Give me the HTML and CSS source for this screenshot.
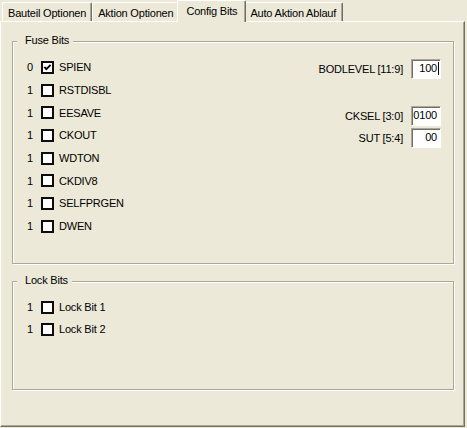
FILE: index.html
```html
<!DOCTYPE html>
<html>
<head>
<meta charset="utf-8">
<link rel="stylesheet" href="styles.css">
</head>
<body>
<div class="dlg">
  <div class="tabs">
    <div class="tab t1">Bauteil Optionen</div>
    <div class="tab t2">Aktion Optionen</div>
    <div class="tab active">Config Bits</div>
    <div class="tab t4">Auto Aktion Ablauf</div>
  </div>
  <div class="panel">
    <div class="group fuse">
      <div class="legend">Fuse Bits</div>
      <div class="fuse-body">
        <div class="bits">
          <div class="row"><span class="num">0</span><span class="cb"><svg width="9" height="9" viewBox="0 0 9 9"><path d="M1.3 3.9 L3.4 6.2 L7.6 1.8" fill="none" stroke="#000" stroke-width="1.9"/></svg></span><span class="lbl">SPIEN</span></div>
          <div class="row"><span class="num">1</span><span class="cb"></span><span class="lbl">RSTDISBL</span></div>
          <div class="row"><span class="num">1</span><span class="cb"></span><span class="lbl">EESAVE</span></div>
          <div class="row"><span class="num">1</span><span class="cb"></span><span class="lbl">CKOUT</span></div>
          <div class="row"><span class="num">1</span><span class="cb"></span><span class="lbl">WDTON</span></div>
          <div class="row"><span class="num">1</span><span class="cb"></span><span class="lbl">CKDIV8</span></div>
          <div class="row"><span class="num">1</span><span class="cb"></span><span class="lbl">SELFPRGEN</span></div>
          <div class="row"><span class="num">1</span><span class="cb"></span><span class="lbl">DWEN</span></div>
        </div>
        <div class="fields">
          <div class="field bod"><span class="flbl">BODLEVEL [11:9]</span><div class="box">100<i class="caret"></i></div></div>
          <div class="field cksel"><span class="flbl">CKSEL [3:0]</span><div class="box">0100</div></div>
          <div class="field sut"><span class="flbl">SUT [5:4]</span><div class="box">00</div></div>
        </div>
      </div>
    </div>
    <div class="group lock">
      <div class="legend">Lock Bits</div>
      <div class="bits lockbits">
        <div class="row"><span class="num">1</span><span class="cb"></span><span class="lbl">Lock Bit 1</span></div>
        <div class="row"><span class="num">1</span><span class="cb"></span><span class="lbl">Lock Bit 2</span></div>
      </div>
    </div>
  </div>
</div>
</body>
</html>
```
FILE: styles.css
```css
html, body {
  margin: 0;
  padding: 0;
  background: #ECE9D8;
}
body {
  width: 467px;
  height: 428px;
  overflow: hidden;
  font-family: "Liberation Sans", Arial, sans-serif;
  font-size: 11px;
  letter-spacing: -0.2px;
  color: #000;
}
.tabs {
  display: flex;
  height: 21px;
  padding-left: 2px;
}
.tab {
  box-sizing: border-box;
  margin-top: 2px;
  height: 19px;
  padding: 1px 5px 0 5px;
  line-height: 18px;
  border-top: 1px solid #fff;
  border-left: 1px solid #fff;
  border-right: 1px solid #716F64;
  box-shadow: inset -1px 0 0 #ACA899;
  border-radius: 2px 2px 0 0;
  white-space: nowrap;
}
.tab.t4 {
  padding: 1px 6px 0 5px;
}
.tab.active {
  position: relative;
  z-index: 2;
  margin: 0 -2px;
  height: 22px;
  padding: 1px 8px 0 8px;
  background: #ECE9D8;
}
.panel {
  box-sizing: border-box;
  width: 465px;
  height: 406px;
  border-top: 1px solid #fff;
  border-left: 1px solid #fff;
  border-right: 1px solid #716F64;
  border-bottom: 1px solid #716F64;
  box-shadow: inset -1px -1px 0 #ACA899;
  padding: 19px 10px 0 11px;
}
.group {
  position: relative;
  box-sizing: border-box;
  border: 1px solid #ACA899;
  box-shadow: inset 1px 1px 0 #fff, 1px 1px 0 #fff;
}
.fuse {
  height: 223px;
}
.lock {
  margin-top: 17px;
  height: 109px;
}
.legend {
  position: absolute;
  top: -8px;
  left: 4px;
  padding: 0 4px 0 8px;
  line-height: 13px;
  background: #ECE9D8;
}
.fuse-body {
  display: flex;
  justify-content: space-between;
}
.bits {
  padding: 14px 0 0 14px;
}
.row {
  display: flex;
  align-items: center;
  height: 22.7px;
}
.lockbits {
  padding-top: 14.5px;
}
.lockbits .row {
  height: 21.7px;
}
.num {
  width: 14px;
}
.cb {
  box-sizing: border-box;
  width: 13px;
  height: 13px;
  border: 2px solid #0d0d0d;
  background: #fff;
  margin-right: 5px;
  display: flex;
  align-items: center;
  justify-content: center;
}
.cb svg {
  display: block;
}
.fields {
  display: flex;
  flex-direction: column;
  align-items: flex-end;
  padding: 17px 12px 0 0;
}
.field {
  display: flex;
  align-items: center;
  gap: 8px;
  height: 20px;
}
.bod {
  margin-bottom: 27px;
}
.cksel {
  margin-bottom: 2px;
}
.box {
  box-sizing: border-box;
  width: 30px;
  height: 20px;
  background: #fff;
  border-top: 1px solid #ACA899;
  border-left: 1px solid #ACA899;
  border-right: 1px solid #fff;
  border-bottom: 1px solid #fff;
  box-shadow: inset 1px 1px 0 #716F64;
  text-align: right;
  padding: 1px 3px 0 0;
  line-height: 15px;
  display: flex;
  justify-content: flex-end;
  align-items: flex-start;
}
.caret {
  display: inline-block;
  width: 1px;
  height: 13px;
  background: #000;
  margin: 1px -2px 0 1px;
}
```
